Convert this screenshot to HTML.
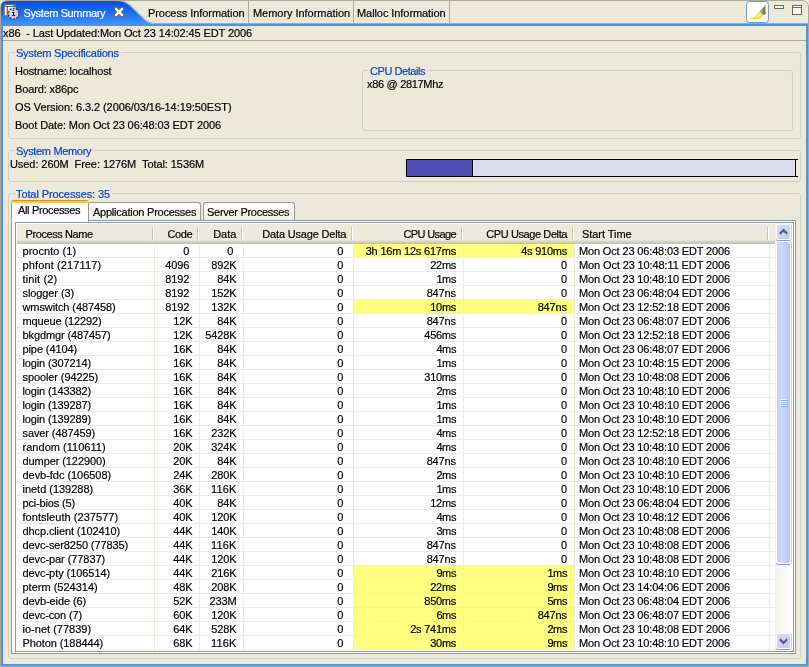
<!DOCTYPE html>
<html><head><meta charset="utf-8"><title>System Summary</title>
<style>
html,body{margin:0;padding:0}
body{width:809px;height:667px;overflow:hidden;background:#ECE9D8;position:relative;font-family:"Liberation Sans",sans-serif;font-size:11px;color:#000;line-height:14px}
div,span{position:absolute;white-space:pre;box-sizing:border-box}
span{-webkit-text-stroke:0.18px}
#frame{left:0;top:0;width:809px;height:667px;border:1px solid #ACA899;border-radius:7px 7px 0 0}
.bl{background:#4296F9}
.t{height:14px;line-height:14px}
.grp{border:1px solid #D0D0BF;border-radius:3px}
.gt{color:#0042D2;background:#ECE9D8;height:14px;line-height:14px;padding:0 2px 0 1px}
.tab{top:202px;height:18px;border:1px solid #919B9C;border-bottom:none;border-radius:3px 3px 0 0;background:linear-gradient(#FFFFFF,#F6F5EF 70%,#EEEDE5)}
.r{left:17px;width:758px;height:14px;border-bottom:1px solid #EEECDD}
.c{top:1px;height:13px;line-height:13px}
.c1{left:5.5px}
.c2{left:137px;width:35.3px;text-align:right}
.c2.k{width:38.5px}
.c3{left:182px;width:34.3px;text-align:right}
.c3.k{width:37.5px}
.c4{left:226px;width:100.3px;text-align:right}
.c5{left:337px;width:102px;text-align:right}
.c6{left:447px;width:103px;text-align:right}
.c7{left:562px}
.y .c5{top:0;line-height:15px;background:#FFFF80;left:337px;width:109px;padding-right:7px}
.y .c6{top:0;line-height:15px;background:#FFFF80;left:447px;width:110px;padding-right:7px}
.vg{top:244px;width:1px;height:407px;background:#EEECDD}
.hs{top:227px;width:2px;height:13px;border-left:1px solid #C7C5B2;background:#fff}
.ht{top:227px;height:14px;line-height:14px}
</style></head><body>
<div id="all" style="left:0;top:0;width:809px;height:667px;will-change:transform"><div id="frame"></div>
<!-- top tab bar -->
<svg style="position:absolute;left:0;top:0" width="809" height="27" viewBox="0 0 809 27">
<defs><linearGradient id="tg" x1="0" y1="0" x2="0" y2="1"><stop offset="0" stop-color="#0450DE"/><stop offset="0.5" stop-color="#1E70F0"/><stop offset="0.92" stop-color="#3C94FE"/><stop offset="1" stop-color="#4096FC"/></linearGradient></defs>
<path d="M1,26 V7 Q1,1 7,1 H117 C123,1 126,2.5 129.5,5.5 L142.5,18 C146,21.5 149,24 156,24 H808 V26 Z" fill="url(#tg)"/>
<path d="M117,0.5 C123,0.5 126.5,2 130,5 L143,17.5 C146.5,21 149.5,23.5 156,23.5 H808" fill="none" stroke="#B5A78C" stroke-width="1"/>
<path d="M248.5,1 V23 M353.5,1 V23 M449.5,1 V23" stroke="#ACA899" stroke-width="1"/>
<!-- view icon -->
<rect x="4" y="4" width="12" height="12" fill="#FFFFFF"/>
<rect x="4" y="4" width="12" height="3" fill="#6C6C8E"/>
<rect x="5" y="5" width="8" height="1" fill="#DCDCEC"/>
<rect x="4" y="7" width="1" height="9" fill="#8C8775"/>
<rect x="15" y="7" width="1" height="9" fill="#9C9CAC"/>
<rect x="4" y="15" width="12" height="1" fill="#8C8775"/>
<rect x="5" y="7" width="1" height="8" fill="#FFFFF2"/>
<rect x="6" y="7" width="1" height="8" fill="#D4CE98"/>
<rect x="7" y="7" width="1" height="8" fill="#7A7762"/>
<circle cx="13.6" cy="13.6" r="5.4" fill="#CDCBE2" stroke="#2E2A3C" stroke-width="1.1" stroke-dasharray="2.2 1.2"/>
<circle cx="13" cy="12.8" r="2.8" fill="#DBDAEC"/>
<rect x="12.7" y="9.7" width="1.4" height="1.4" fill="#1E1C28"/>
<rect x="12" y="12" width="2.2" height="0.9" fill="#1E1C28"/>
<rect x="13" y="12" width="1.2" height="3.5" fill="#1E1C28"/>
<rect x="12" y="15" width="3.2" height="0.9" fill="#1E1C28"/>
<!-- close X -->
<polygon points="114.5,7.5 116.8,7.5 119.0,9.7 121.2,7.5 123.5,7.5 123.5,9.8 121.3,12.0 123.5,14.2 123.5,16.5 121.2,16.5 119.0,14.3 116.8,16.5 114.5,16.5 114.5,14.2 116.7,12.0 114.5,9.8" fill="#fff" stroke="#7E6C44" stroke-width="1" stroke-linejoin="round"/>
<!-- toolbar button -->
<rect x="746.5" y="1.5" width="22" height="21" rx="3" fill="#fff" stroke="#7A98C4"/>
<path d="M765.3,5 L765.8,14 L763.2,15.2 L759.6,11.5 Z" fill="#7E7A6A"/>
<path d="M765.3,5 L762.8,9 L762.8,14.8 L759.6,11.5 Z" fill="#A9A593"/>
<path d="M759.6,11.5 L763.6,15.5 L758.5,19.3 L753.8,17.8 Z" fill="#FFD92E"/>
<path d="M759.6,13 L761.6,15 L757.6,17.8 L756,17 Z" fill="#FFF08A"/>
<path d="M750,18.5 H755" stroke="#F2C81E" stroke-width="1"/>
<!-- min / max -->
<rect x="774.5" y="5.5" width="9" height="3" fill="#fff" stroke="#6F6A58"/>
<rect x="792.5" y="5.5" width="9" height="9" fill="#fff" stroke="#6F6A58"/>
<path d="M793,7.5 H801" stroke="#6F6A58"/>
</svg>
<span class="t" style="left:23.5px;top:6px;color:#fff;letter-spacing:-0.369px">System Summary</span>
<span class="t" style="left:148px;top:6px;letter-spacing:-0.067px">Process Information</span>
<span class="t" style="left:253px;top:6px;letter-spacing:-0.040px">Memory Information</span>
<span class="t" style="left:357px;top:6px;letter-spacing:-0.074px">Malloc Information</span>
<!-- frame blue borders -->
<div class="bl" style="left:1px;top:26px;width:2px;height:640px"></div>
<div class="bl" style="left:806px;top:26px;width:2px;height:640px"></div>
<div class="bl" style="left:1px;top:664px;width:807px;height:2px"></div>
<!-- status line -->
<span class="t" style="left:3px;top:26px;letter-spacing:-0.108px">x86  - Last Updated:Mon Oct 23 14:02:45 EDT 2006</span>
<div style="left:3px;top:40px;width:803px;height:1px;background:#ACA899"></div>
<!-- System Specifications -->
<div class="grp" style="left:8px;top:52px;width:793px;height:87px"></div>
<span class="gt" style="left:15px;top:46px;letter-spacing:-0.230px">System Specifications</span>
<span class="t" style="left:15px;top:64px;letter-spacing:-0.173px">Hostname: localhost</span>
<span class="t" style="left:15px;top:82px;letter-spacing:-0.121px">Board: x86pc</span>
<span class="t" style="left:15px;top:100px;letter-spacing:-0.070px">OS Version: 6.3.2 (2006/03/16-14:19:50EST)</span>
<span class="t" style="left:15px;top:118px;letter-spacing:-0.106px">Boot Date: Mon Oct 23 06:48:03 EDT 2006</span>
<div class="grp" style="left:362px;top:70px;width:431px;height:61px"></div>
<span class="gt" style="left:369px;top:64px;letter-spacing:-0.441px">CPU Details</span>
<span class="t" style="left:367px;top:77px;letter-spacing:-0.314px">x86 @ 2817Mhz</span>
<!-- System Memory -->
<div class="grp" style="left:8px;top:150px;width:793px;height:32px"></div>
<span class="gt" style="left:15px;top:144px;letter-spacing:-0.331px">System Memory</span>
<span class="t" style="left:10px;top:157px;letter-spacing:-0.070px">Used: 260M  Free: 1276M  Total: 1536M</span>
<div style="left:406px;top:159px;width:392px;height:18px;border-top:1px solid #000;border-bottom:1px solid #000;"></div>
<div style="left:406px;top:159px;width:390px;height:18px;border:1px solid #000;background:#DCDCF0"></div>
<div style="left:407px;top:160px;width:66px;height:16px;border-right:1px solid #000;background:#5050B4"></div>
<!-- Total Processes -->
<div class="grp" style="left:8px;top:193px;width:793px;height:466px"></div>
<span class="gt" style="left:15px;top:187px;letter-spacing:-0.104px">Total Processes: 35</span>
<!-- tab folder body -->
<div style="left:11px;top:220px;width:785px;height:434px;border:1px solid #919B9C;background:#FCFCFE"></div>
<div class="tab" style="left:89px;width:112px;border-left:none;border-radius:0 3px 0 0"></div>
<div class="tab" style="left:203px;width:92px"></div>
<div style="left:11px;top:202px;width:78px;height:20px;border-left:1px solid #919B9C;border-right:1px solid #919B9C;background:#FCFCFE"></div>
<div style="left:11px;top:200px;width:78px;height:3px;border-radius:3px 3px 0 0;background:linear-gradient(#E68B2C 0,#E68B2C 1px,#FFC73C 1px)"></div>
<span class="t" style="left:18px;top:203px;letter-spacing:-0.345px">All Processes</span>
<span class="t" style="left:93px;top:205px;letter-spacing:-0.237px">Application Processes</span>
<span class="t" style="left:207px;top:205px;letter-spacing:-0.287px">Server Processes</span>
<!-- table -->
<div style="left:15px;top:222px;width:779px;height:430px;border:1px solid #7F9DB9;background:#fff"></div>
<div style="left:17px;top:224px;width:758px;height:20px;background:linear-gradient(#EBEADB 0,#EBEADB 16px,#E4E1D0 16px,#E4E1D0 17px,#D9D5C5 17px,#D9D5C5 18px,#CFCBBC 18px,#CFCBBC 19px,#C9C5B6 19px)"></div>
<div class="hs" style="left:152px"></div><div class="hs" style="left:197px"></div><div class="hs" style="left:241px"></div><div class="hs" style="left:351px"></div><div class="hs" style="left:461px"></div><div class="hs" style="left:572px"></div><div class="hs" style="left:767px"></div>
<span class="ht" style="left:25.5px;letter-spacing:-0.411px">Process Name</span>
<span class="ht" style="left:154px;width:38.2px;text-align:right;letter-spacing:-0.391px">Code</span>
<span class="ht" style="left:199px;width:37.3px;text-align:right;letter-spacing:-0.042px">Data</span>
<span class="ht" style="left:243px;width:103.3px;text-align:right;letter-spacing:-0.180px">Data Usage Delta</span>
<span class="ht" style="left:353px;width:103px;text-align:right;letter-spacing:-0.619px">CPU Usage</span>
<span class="ht" style="left:463px;width:104px;text-align:right;letter-spacing:-0.407px">CPU Usage Delta</span>
<span class="ht" style="left:582px;letter-spacing:-0.056px">Start Time</span>
<div class="r y" style="top:244px"><span class="c c1" style="letter-spacing:0.047px">procnto (1)</span><span class="c c2" style="letter-spacing:0.000px">0</span><span class="c c3" style="letter-spacing:0.000px">0</span><span class="c c4" style="letter-spacing:0.000px">0</span><span class="c c5" style="letter-spacing:-0.204px">3h 16m 12s 617ms</span><span class="c c6" style="letter-spacing:-0.243px">4s 910ms</span><span class="c c7" style="letter-spacing:-0.148px">Mon Oct 23 06:48:03 EDT 2006</span></div>
<div class="r" style="top:258px"><span class="c c1" style="letter-spacing:0.129px">phfont (217117)</span><span class="c c2" style="letter-spacing:-0.120px">4096</span><span class="c c3 k" style="letter-spacing:-0.120px">892K</span><span class="c c4" style="letter-spacing:0.000px">0</span><span class="c c5" style="letter-spacing:-0.302px">22ms</span><span class="c c6" style="letter-spacing:0.000px">0</span><span class="c c7" style="letter-spacing:-0.118px">Mon Oct 23 10:48:11 EDT 2006</span></div>
<div class="r" style="top:272px"><span class="c c1" style="letter-spacing:0.131px">tinit (2)</span><span class="c c2" style="letter-spacing:-0.120px">8192</span><span class="c c3 k" style="letter-spacing:-0.117px">84K</span><span class="c c4" style="letter-spacing:0.000px">0</span><span class="c c5" style="letter-spacing:-0.391px">1ms</span><span class="c c6" style="letter-spacing:0.000px">0</span><span class="c c7" style="letter-spacing:-0.148px">Mon Oct 23 10:48:10 EDT 2006</span></div>
<div class="r" style="top:286px"><span class="c c1" style="letter-spacing:-0.091px">slogger (3)</span><span class="c c2" style="letter-spacing:-0.120px">8192</span><span class="c c3 k" style="letter-spacing:-0.120px">152K</span><span class="c c4" style="letter-spacing:0.000px">0</span><span class="c c5" style="letter-spacing:-0.121px">847ns</span><span class="c c6" style="letter-spacing:0.000px">0</span><span class="c c7" style="letter-spacing:-0.148px">Mon Oct 23 06:48:04 EDT 2006</span></div>
<div class="r y" style="top:300px"><span class="c c1" style="letter-spacing:-0.100px">wmswitch (487458)</span><span class="c c2" style="letter-spacing:-0.120px">8192</span><span class="c c3 k" style="letter-spacing:-0.120px">132K</span><span class="c c4" style="letter-spacing:0.000px">0</span><span class="c c5" style="letter-spacing:-0.302px">10ms</span><span class="c c6" style="letter-spacing:-0.121px">847ns</span><span class="c c7" style="letter-spacing:-0.148px">Mon Oct 23 12:52:18 EDT 2006</span></div>
<div class="r" style="top:314px"><span class="c c1" style="letter-spacing:-0.120px">mqueue (12292)</span><span class="c c2 k" style="letter-spacing:-0.117px">12K</span><span class="c c3 k" style="letter-spacing:-0.117px">84K</span><span class="c c4" style="letter-spacing:0.000px">0</span><span class="c c5" style="letter-spacing:-0.121px">847ns</span><span class="c c6" style="letter-spacing:0.000px">0</span><span class="c c7" style="letter-spacing:-0.148px">Mon Oct 23 06:48:07 EDT 2006</span></div>
<div class="r" style="top:328px"><span class="c c1" style="letter-spacing:-0.115px">bkgdmgr (487457)</span><span class="c c2 k" style="letter-spacing:-0.117px">12K</span><span class="c c3 k" style="letter-spacing:-0.117px">5428K</span><span class="c c4" style="letter-spacing:0.000px">0</span><span class="c c5" style="letter-spacing:-0.258px">456ms</span><span class="c c6" style="letter-spacing:0.000px">0</span><span class="c c7" style="letter-spacing:-0.148px">Mon Oct 23 12:52:18 EDT 2006</span></div>
<div class="r" style="top:342px"><span class="c c1" style="letter-spacing:-0.098px">pipe (4104)</span><span class="c c2 k" style="letter-spacing:-0.117px">16K</span><span class="c c3 k" style="letter-spacing:-0.117px">84K</span><span class="c c4" style="letter-spacing:0.000px">0</span><span class="c c5" style="letter-spacing:-0.391px">4ms</span><span class="c c6" style="letter-spacing:0.000px">0</span><span class="c c7" style="letter-spacing:-0.148px">Mon Oct 23 06:48:07 EDT 2006</span></div>
<div class="r" style="top:356px"><span class="c c1" style="letter-spacing:-0.129px">login (307214)</span><span class="c c2 k" style="letter-spacing:-0.117px">16K</span><span class="c c3 k" style="letter-spacing:-0.117px">84K</span><span class="c c4" style="letter-spacing:0.000px">0</span><span class="c c5" style="letter-spacing:-0.391px">1ms</span><span class="c c6" style="letter-spacing:0.000px">0</span><span class="c c7" style="letter-spacing:-0.148px">Mon Oct 23 10:48:15 EDT 2006</span></div>
<div class="r" style="top:370px"><span class="c c1" style="letter-spacing:-0.099px">spooler (94225)</span><span class="c c2 k" style="letter-spacing:-0.117px">16K</span><span class="c c3 k" style="letter-spacing:-0.117px">84K</span><span class="c c4" style="letter-spacing:0.000px">0</span><span class="c c5" style="letter-spacing:-0.258px">310ms</span><span class="c c6" style="letter-spacing:0.000px">0</span><span class="c c7" style="letter-spacing:-0.148px">Mon Oct 23 10:48:08 EDT 2006</span></div>
<div class="r" style="top:384px"><span class="c c1" style="letter-spacing:-0.129px">login (143382)</span><span class="c c2 k" style="letter-spacing:-0.117px">16K</span><span class="c c3 k" style="letter-spacing:-0.117px">84K</span><span class="c c4" style="letter-spacing:0.000px">0</span><span class="c c5" style="letter-spacing:-0.391px">2ms</span><span class="c c6" style="letter-spacing:0.000px">0</span><span class="c c7" style="letter-spacing:-0.148px">Mon Oct 23 10:48:10 EDT 2006</span></div>
<div class="r" style="top:398px"><span class="c c1" style="letter-spacing:-0.129px">login (139287)</span><span class="c c2 k" style="letter-spacing:-0.117px">16K</span><span class="c c3 k" style="letter-spacing:-0.117px">84K</span><span class="c c4" style="letter-spacing:0.000px">0</span><span class="c c5" style="letter-spacing:-0.391px">1ms</span><span class="c c6" style="letter-spacing:0.000px">0</span><span class="c c7" style="letter-spacing:-0.148px">Mon Oct 23 10:48:10 EDT 2006</span></div>
<div class="r" style="top:412px"><span class="c c1" style="letter-spacing:-0.129px">login (139289)</span><span class="c c2 k" style="letter-spacing:-0.117px">16K</span><span class="c c3 k" style="letter-spacing:-0.117px">84K</span><span class="c c4" style="letter-spacing:0.000px">0</span><span class="c c5" style="letter-spacing:-0.391px">1ms</span><span class="c c6" style="letter-spacing:0.000px">0</span><span class="c c7" style="letter-spacing:-0.148px">Mon Oct 23 10:48:10 EDT 2006</span></div>
<div class="r" style="top:426px"><span class="c c1" style="letter-spacing:-0.102px">saver (487459)</span><span class="c c2 k" style="letter-spacing:-0.117px">16K</span><span class="c c3 k" style="letter-spacing:-0.120px">232K</span><span class="c c4" style="letter-spacing:0.000px">0</span><span class="c c5" style="letter-spacing:-0.391px">4ms</span><span class="c c6" style="letter-spacing:0.000px">0</span><span class="c c7" style="letter-spacing:-0.148px">Mon Oct 23 12:52:18 EDT 2006</span></div>
<div class="r" style="top:440px"><span class="c c1" style="letter-spacing:0.029px">random (110611)</span><span class="c c2 k" style="letter-spacing:-0.117px">20K</span><span class="c c3 k" style="letter-spacing:-0.120px">324K</span><span class="c c4" style="letter-spacing:0.000px">0</span><span class="c c5" style="letter-spacing:-0.391px">4ms</span><span class="c c6" style="letter-spacing:0.000px">0</span><span class="c c7" style="letter-spacing:-0.148px">Mon Oct 23 10:48:10 EDT 2006</span></div>
<div class="r" style="top:454px"><span class="c c1" style="letter-spacing:-0.087px">dumper (122900)</span><span class="c c2 k" style="letter-spacing:-0.117px">20K</span><span class="c c3 k" style="letter-spacing:-0.117px">84K</span><span class="c c4" style="letter-spacing:0.000px">0</span><span class="c c5" style="letter-spacing:-0.121px">847ns</span><span class="c c6" style="letter-spacing:0.000px">0</span><span class="c c7" style="letter-spacing:-0.148px">Mon Oct 23 10:48:10 EDT 2006</span></div>
<div class="r" style="top:468px"><span class="c c1" style="letter-spacing:-0.038px">devb-fdc (106508)</span><span class="c c2 k" style="letter-spacing:-0.117px">24K</span><span class="c c3 k" style="letter-spacing:-0.120px">280K</span><span class="c c4" style="letter-spacing:0.000px">0</span><span class="c c5" style="letter-spacing:-0.391px">2ms</span><span class="c c6" style="letter-spacing:0.000px">0</span><span class="c c7" style="letter-spacing:-0.148px">Mon Oct 23 10:48:10 EDT 2006</span></div>
<div class="r" style="top:482px"><span class="c c1" style="letter-spacing:-0.022px">inetd (139288)</span><span class="c c2 k" style="letter-spacing:-0.117px">36K</span><span class="c c3 k" style="letter-spacing:0.156px">116K</span><span class="c c4" style="letter-spacing:0.000px">0</span><span class="c c5" style="letter-spacing:-0.391px">1ms</span><span class="c c6" style="letter-spacing:0.000px">0</span><span class="c c7" style="letter-spacing:-0.148px">Mon Oct 23 10:48:10 EDT 2006</span></div>
<div class="r" style="top:496px"><span class="c c1" style="letter-spacing:-0.158px">pci-bios (5)</span><span class="c c2 k" style="letter-spacing:-0.117px">40K</span><span class="c c3 k" style="letter-spacing:-0.117px">84K</span><span class="c c4" style="letter-spacing:0.000px">0</span><span class="c c5" style="letter-spacing:-0.302px">12ms</span><span class="c c6" style="letter-spacing:0.000px">0</span><span class="c c7" style="letter-spacing:-0.148px">Mon Oct 23 06:48:04 EDT 2006</span></div>
<div class="r" style="top:510px"><span class="c c1" style="letter-spacing:0.049px">fontsleuth (237577)</span><span class="c c2 k" style="letter-spacing:-0.117px">40K</span><span class="c c3 k" style="letter-spacing:-0.120px">120K</span><span class="c c4" style="letter-spacing:0.000px">0</span><span class="c c5" style="letter-spacing:-0.391px">4ms</span><span class="c c6" style="letter-spacing:0.000px">0</span><span class="c c7" style="letter-spacing:-0.148px">Mon Oct 23 10:48:12 EDT 2006</span></div>
<div class="r" style="top:524px"><span class="c c1" style="letter-spacing:-0.106px">dhcp.client (102410)</span><span class="c c2 k" style="letter-spacing:-0.117px">44K</span><span class="c c3 k" style="letter-spacing:-0.120px">140K</span><span class="c c4" style="letter-spacing:0.000px">0</span><span class="c c5" style="letter-spacing:-0.391px">3ms</span><span class="c c6" style="letter-spacing:0.000px">0</span><span class="c c7" style="letter-spacing:-0.148px">Mon Oct 23 10:48:08 EDT 2006</span></div>
<div class="r" style="top:538px"><span class="c c1" style="letter-spacing:-0.103px">devc-ser8250 (77835)</span><span class="c c2 k" style="letter-spacing:-0.117px">44K</span><span class="c c3 k" style="letter-spacing:0.156px">116K</span><span class="c c4" style="letter-spacing:0.000px">0</span><span class="c c5" style="letter-spacing:-0.121px">847ns</span><span class="c c6" style="letter-spacing:0.000px">0</span><span class="c c7" style="letter-spacing:-0.148px">Mon Oct 23 10:48:08 EDT 2006</span></div>
<div class="r" style="top:552px"><span class="c c1" style="letter-spacing:-0.074px">devc-par (77837)</span><span class="c c2 k" style="letter-spacing:-0.117px">44K</span><span class="c c3 k" style="letter-spacing:-0.120px">120K</span><span class="c c4" style="letter-spacing:0.000px">0</span><span class="c c5" style="letter-spacing:-0.121px">847ns</span><span class="c c6" style="letter-spacing:0.000px">0</span><span class="c c7" style="letter-spacing:-0.148px">Mon Oct 23 10:48:08 EDT 2006</span></div>
<div class="r y" style="top:566px"><span class="c c1" style="letter-spacing:-0.062px">devc-pty (106514)</span><span class="c c2 k" style="letter-spacing:-0.117px">44K</span><span class="c c3 k" style="letter-spacing:-0.120px">216K</span><span class="c c4" style="letter-spacing:0.000px">0</span><span class="c c5" style="letter-spacing:-0.391px">9ms</span><span class="c c6" style="letter-spacing:-0.391px">1ms</span><span class="c c7" style="letter-spacing:-0.148px">Mon Oct 23 10:48:10 EDT 2006</span></div>
<div class="r y" style="top:580px"><span class="c c1" style="letter-spacing:-0.004px">pterm (524314)</span><span class="c c2 k" style="letter-spacing:-0.117px">48K</span><span class="c c3 k" style="letter-spacing:-0.120px">208K</span><span class="c c4" style="letter-spacing:0.000px">0</span><span class="c c5" style="letter-spacing:-0.302px">22ms</span><span class="c c6" style="letter-spacing:-0.391px">9ms</span><span class="c c7" style="letter-spacing:-0.148px">Mon Oct 23 14:04:06 EDT 2006</span></div>
<div class="r y" style="top:594px"><span class="c c1" style="letter-spacing:-0.096px">devb-eide (6)</span><span class="c c2 k" style="letter-spacing:-0.117px">52K</span><span class="c c3 k" style="letter-spacing:-0.120px">233M</span><span class="c c4" style="letter-spacing:0.000px">0</span><span class="c c5" style="letter-spacing:-0.258px">850ms</span><span class="c c6" style="letter-spacing:-0.391px">5ms</span><span class="c c7" style="letter-spacing:-0.148px">Mon Oct 23 06:48:04 EDT 2006</span></div>
<div class="r y" style="top:608px"><span class="c c1" style="letter-spacing:-0.134px">devc-con (7)</span><span class="c c2 k" style="letter-spacing:-0.117px">60K</span><span class="c c3 k" style="letter-spacing:-0.120px">120K</span><span class="c c4" style="letter-spacing:0.000px">0</span><span class="c c5" style="letter-spacing:-0.391px">6ms</span><span class="c c6" style="letter-spacing:-0.121px">847ns</span><span class="c c7" style="letter-spacing:-0.148px">Mon Oct 23 06:48:07 EDT 2006</span></div>
<div class="r y" style="top:622px"><span class="c c1" style="letter-spacing:0.013px">io-net (77839)</span><span class="c c2 k" style="letter-spacing:-0.117px">64K</span><span class="c c3 k" style="letter-spacing:-0.120px">528K</span><span class="c c4" style="letter-spacing:0.000px">0</span><span class="c c5" style="letter-spacing:-0.243px">2s 741ms</span><span class="c c6" style="letter-spacing:-0.391px">2ms</span><span class="c c7" style="letter-spacing:-0.148px">Mon Oct 23 10:48:08 EDT 2006</span></div>
<div class="r y" style="top:636px"><span class="c c1" style="letter-spacing:-0.092px">Photon (188444)</span><span class="c c2 k" style="letter-spacing:-0.117px">68K</span><span class="c c3 k" style="letter-spacing:0.156px">116K</span><span class="c c4" style="letter-spacing:0.000px">0</span><span class="c c5" style="letter-spacing:-0.302px">30ms</span><span class="c c6" style="letter-spacing:-0.391px">9ms</span><span class="c c7" style="letter-spacing:-0.148px">Mon Oct 23 10:48:10 EDT 2006</span></div>
<div class="vg" style="left:154px"></div><div class="vg" style="left:199px"></div><div class="vg" style="left:243px"></div><div class="vg" style="left:353px"></div><div class="vg" style="left:463px"></div><div class="vg" style="left:574px"></div><div class="vg" style="left:769px"></div>
<!-- scrollbar -->
<div style="left:775px;top:223px;width:17px;height:428px;background:linear-gradient(90deg,#F3F1EC,#FEFEFB)"></div>
<div style="left:776px;top:224px;width:15px;height:16px;background:#fff;border-radius:2px;box-shadow:1px 0 0 #C3D0EE,0 1px 0 #7F9FE3"></div>
<div style="left:777px;top:225px;width:13px;height:14px;border-radius:2px;background:linear-gradient(135deg,#D2DEFE,#B7CBFA)"></div>
<svg style="position:absolute;left:777px;top:225px" width="13" height="14"><path d="M2.8,8.8 L6.5,5.1 L10.2,8.8" fill="none" stroke="#4D6185" stroke-width="2.2"/></svg>
<div style="left:776px;top:241px;width:15px;height:323px;background:#fff;border-radius:2px;box-shadow:1px 0 0 #C3D0EE,0 1px 0 #7B9CE0"></div>
<div style="left:777px;top:242px;width:13px;height:321px;border-radius:2px;background:linear-gradient(90deg,#C4D3FB,#CAD8FD 40%,#B5C8F8)"></div>
<div style="left:780px;top:399px;width:7px;height:8px;background:repeating-linear-gradient(#EEF4FE 0,#EEF4FE 1px,transparent 1px,transparent 2px)"></div>
<div style="left:781px;top:400px;width:7px;height:8px;background:repeating-linear-gradient(#8CB0F8 0,#8CB0F8 1px,transparent 1px,transparent 2px)"></div>
<div style="left:776px;top:633px;width:15px;height:16px;background:#fff;border-radius:2px;box-shadow:1px 0 0 #C3D0EE,0 1px 0 #7F9FE3"></div>
<div style="left:777px;top:634px;width:13px;height:14px;border-radius:2px;background:linear-gradient(135deg,#D2DEFE,#B7CBFA)"></div>
<svg style="position:absolute;left:777px;top:634px" width="13" height="14"><path d="M2.8,5.2 L6.5,8.9 L10.2,5.2" fill="none" stroke="#4D6185" stroke-width="2.2"/></svg>
</div></body></html>
